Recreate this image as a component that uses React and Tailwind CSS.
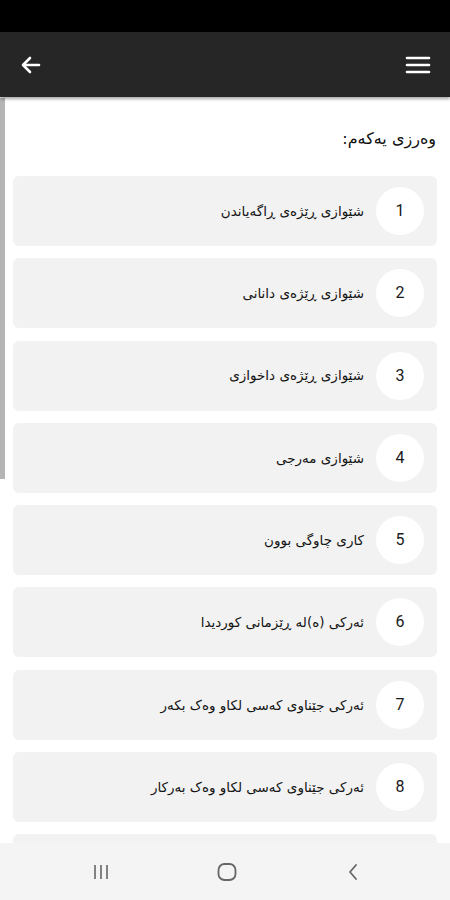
import React from 'react';

const lessons = [
  'شێوازی ڕێژەی ڕاگەیاندن',
  'شێوازی ڕێژەی دانانی',
  'شێوازی ڕێژەی داخوازی',
  'شێوازی مەرجی',
  'کاری چاوگی بوون',
  'ئەرکی (ە)لە ڕێزمانی کوردیدا',
  'ئەرکی جێناوی کەسی لکاو وەک بکەر',
  'ئەرکی جێناوی کەسی لکاو وەک بەرکار',
];

const kurdish = { fontFamily: '"DejaVu Sans", "Noto Sans", sans-serif' };

const App = () => {
  return (
    <div className="w-[450px] h-[900px] flex flex-col overflow-hidden bg-white" style={{ fontFamily: 'Roboto, "Liberation Sans", sans-serif' }}>
      {/* status bar */}
      <div className="h-8 bg-black shrink-0" />

      {/* app bar */}
      <div className="h-[65px] bg-[#262626] shrink-0 flex items-center justify-between px-[19px] shadow-[0_2px_3px_rgba(0,0,0,0.35)] z-10">
        <svg width="24" height="24" viewBox="0 0 24 24" fill="none" stroke="white" strokeWidth="2.6" strokeLinecap="round" strokeLinejoin="round">
          <path d="M20 12H4.5" />
          <path d="M11 5l-7 7 7 7" />
        </svg>
        <svg width="26" height="22" viewBox="0 0 26 22" fill="none" stroke="white" strokeWidth="2.6" strokeLinecap="round">
          <path d="M2 4h22" />
          <path d="M2 11h22" />
          <path d="M2 18h22" />
        </svg>
      </div>

      {/* content */}
      <div className="flex-1 relative overflow-hidden">
        <div className="absolute left-0 top-[1px] w-[5px] h-[381px] bg-[#b5b5b5]" />
        <div dir="rtl" className="pl-[13px] pr-[13px]">
          <div className="pt-[30px] pb-[25px] pr-[1px] text-[16px] leading-6 text-[#111]" style={kurdish}>وەرزی یەکەم:</div>
          <div className="flex flex-col gap-[12.3px]">
            {lessons.map((title, i) => (
              <div key={i} className="h-[70px] bg-[#f2f2f2] rounded-[6px] flex items-center gap-3 pr-[13px]">
                <div className="w-12 h-12 rounded-full bg-white flex items-center justify-center shrink-0 text-[16px] text-[#1a1a1a]">
                  {i + 1}
                </div>
                <div className="text-[13.5px] text-[#141414]" style={kurdish}>{title}</div>
              </div>
            ))}
            {/* next card, mostly hidden under the nav bar */}
            <div className="h-[70px] bg-[#f2f2f2] rounded-[6px]" />
          </div>
        </div>
      </div>

      {/* system nav bar */}
      <div className="h-[57px] bg-[#f4f4f4] shrink-0 flex items-center justify-center pl-[4px]">
        <div className="w-[126px] flex justify-center">
          <svg width="20" height="18" viewBox="0 0 20 18" fill="none" stroke="#666" strokeWidth="1.6">
            <path d="M4 2v14" />
            <path d="M10 2v14" />
            <path d="M16 2v14" />
          </svg>
        </div>
        <div className="w-[126px] flex justify-center">
          <svg width="22" height="22" viewBox="0 0 22 22" fill="none" stroke="#666" strokeWidth="1.8">
            <rect x="2.5" y="3" width="17" height="16" rx="6" />
          </svg>
        </div>
        <div className="w-[126px] flex justify-center">
          <svg width="14" height="20" viewBox="0 0 14 20" fill="none" stroke="#666" strokeWidth="1.8" strokeLinecap="round" strokeLinejoin="round">
            <path d="M10 3L4 10l6 7" />
          </svg>
        </div>
      </div>
    </div>
  );
};

export default App;
